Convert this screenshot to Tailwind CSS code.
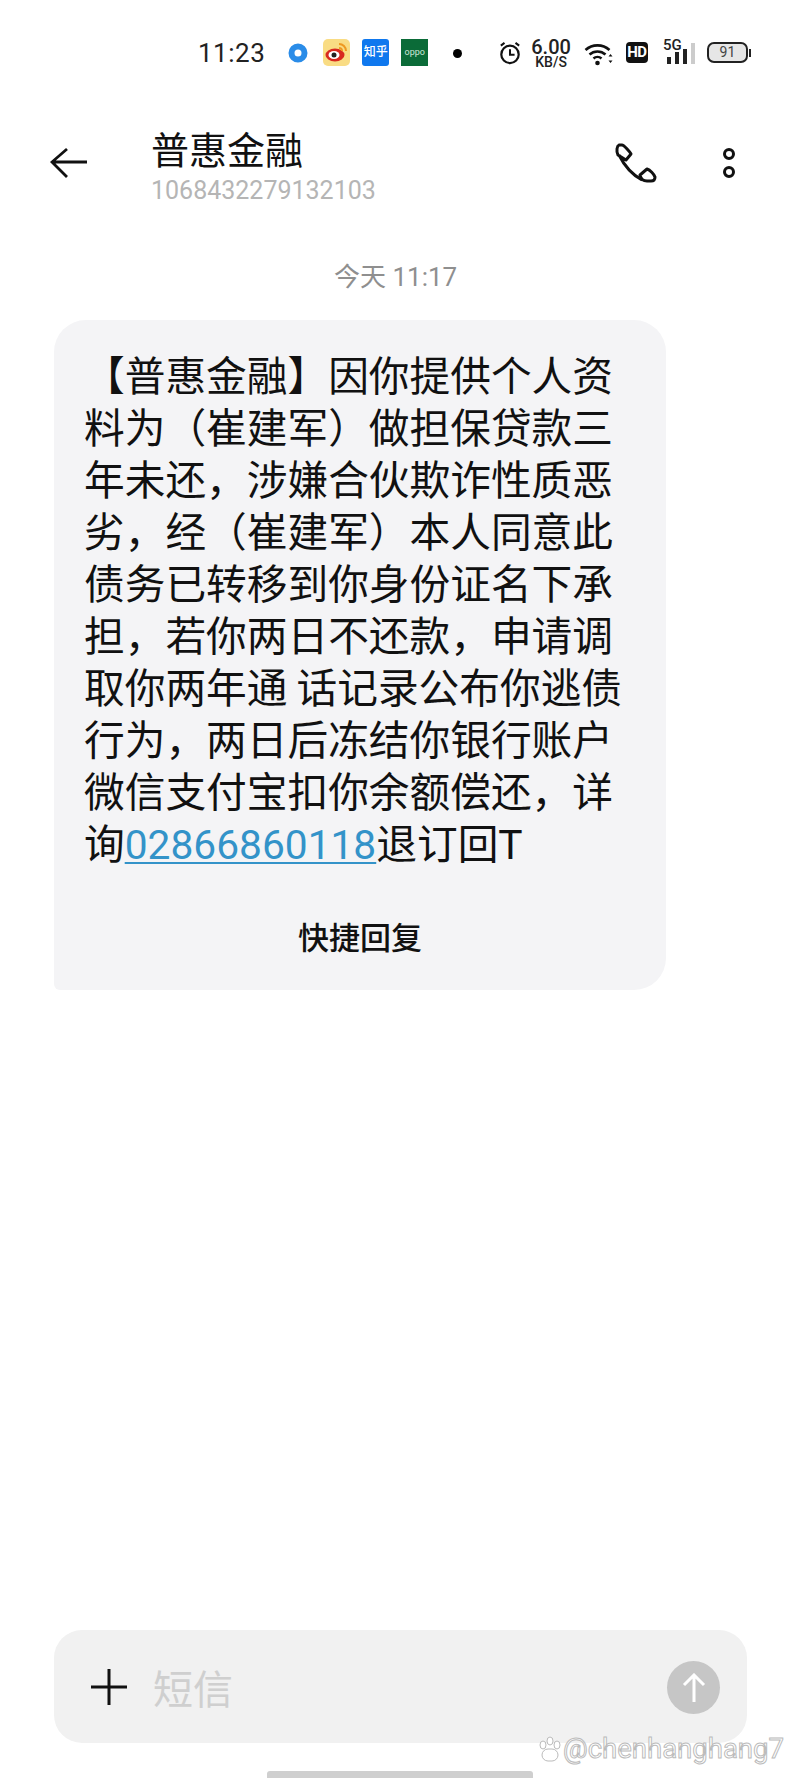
<!DOCTYPE html>
<html lang="en">
<head>
    <meta charset="UTF-8" />
    <title>普惠金融</title>
    <script src="https://cdn.jsdelivr.net/npm/@tailwindcss/browser@4"></script>
</head>
<body class="bg-white text-black font-['Roboto','Noto_Sans_CJK_SC',sans-serif]">
<div class="relative w-[800px] h-[1778px] overflow-hidden flex flex-col">

    <!-- status bar -->
    <div class="h-[106px] pl-[198px] pt-[38px] flex items-start">
        <span class="text-[26px] leading-[30px] text-[#222] tracking-[0.5px]">11:23</span>
        <svg class="ml-[23px] mt-[5px]" width="20" height="20" viewBox="0 0 20 20"><circle cx="10" cy="10" r="6.5" fill="none" stroke="#2a8ce8" stroke-width="6"/></svg>
        <svg class="ml-[15px] mt-[1px]" width="27" height="27" viewBox="0 0 27 27"><rect width="27" height="27" rx="5" fill="#f9dc84"/><ellipse cx="12" cy="16" rx="9.5" ry="6.5" fill="#d8281f"/><ellipse cx="11" cy="16" rx="5.5" ry="4" fill="#fff"/><circle cx="11" cy="16" r="2.5" fill="#222"/><path d="M16 5a7 7 0 0 1 7 7M16 9a3 3 0 0 1 3 3" fill="none" stroke="#ee9922" stroke-width="2"/></svg>
        <div class="ml-[12px] mt-[1px] w-[27px] h-[27px] rounded-[3px] bg-[#0f78ee] text-white text-[12px] leading-[27px] text-center font-medium">知乎</div>
        <div class="ml-[12px] mt-[1px] w-[27px] h-[27px] bg-[#0b6b38] text-[#cfe8d8] text-[9px] leading-[27px] text-center">oppo</div>
        <div class="ml-[25px] mt-[11px] w-[9px] h-[9px] rounded-full bg-black"></div>
        <svg class="ml-[37px] mt-[3px]" width="22" height="24" viewBox="0 0 24 26"><circle cx="12" cy="14.500" r="9.500" fill="none" stroke="#111" stroke-width="2.400"/><path d="M12 9v6h5" fill="none" stroke="#111" stroke-width="2.200"/><path d="M2 5l4-3M22 5l-4-3" stroke="#111" stroke-width="2.200"/></svg>
        <div class="ml-[10px] flex flex-col items-center text-[#222]">
            <span class="text-[20px] leading-[18px] font-medium">6.00</span>
            <span class="text-[14px] leading-[13px] font-medium">KB/S</span>
        </div>
        <svg class="ml-[13px] mt-[4px]" width="31" height="24" viewBox="0 0 30 24"><path d="M1 8a18 18 0 0 1 24 0M5 12.500a12 12 0 0 1 16 0M9 16.500a6 6 0 0 1 8 0" fill="none" stroke="#111" stroke-width="2.600"/><circle cx="13" cy="21" r="2.300" fill="#111"/><path d="M26 12l2 2.500h-4zM26 21l2-2.500h-4z" fill="#111"/></svg>
        <div class="ml-[11px] mt-[4px] w-[22px] h-[21px] rounded-[4px] bg-[#111] text-white text-[15px] leading-[21px] text-center font-bold tracking-[-0.5px]">HD</div>
        <div class="ml-[15px] relative w-[32px] h-[26px]">
            <span class="absolute left-0 top-[1px] text-[15px] leading-[13px] font-medium text-[#222]">5G</span>
            <div class="absolute left-[4px] bottom-0 w-[4px] h-[7px] bg-[#222]"></div>
            <div class="absolute left-[12px] bottom-0 w-[4px] h-[12px] bg-[#222]"></div>
            <div class="absolute left-[20px] bottom-0 w-[4px] h-[15px] bg-[#222]"></div>
            <div class="absolute left-[28px] bottom-0 w-[4px] h-[21px] bg-[#ccc]"></div>
        </div>
        <div class="ml-[12px] mt-[4px] flex items-center">
            <div class="w-[41px] h-[21px] rounded-[7px] border-2 border-[#222] bg-[#e6e6e6] text-[14px] leading-[17px] text-center text-[#444]">91</div>
            <div class="ml-[1px] w-[2px] h-[8px] bg-[#222]"></div>
        </div>
    </div>

    <!-- header -->
    <div class="h-[104px] flex items-start relative">
        <svg class="ml-[50px] mt-[40px]" width="38" height="34" viewBox="0 0 38 34"><path d="M17 3L2 16l15 15M2 16h35" fill="none" stroke="#111" stroke-width="2.800"/></svg>
        <div class="ml-[63px] mt-[-2px] flex flex-col pt-[15px]">
            <span class="text-[38px] leading-[57px] text-[#111] font-['Noto_Sans_CJK_SC',sans-serif]">普惠金融</span>
            <span class="text-[25px] leading-[30px] text-[#b5b5b5]">1068432279132103</span>
        </div>
        <svg class="absolute left-[614px] top-[36px]" width="44" height="42" viewBox="0 0 44 42"><path d="M5 3h3c2 0 8 7 9 9l-5 6-8-5C2 9 3 4 5 3zM5 13c5 10 12 19 23 25M26 33l7-6c3 1 7 5 8 8 0 3-2 4-4 4h-4c-3 0-6-2-7-6z" fill="none" stroke="#111" stroke-width="3" stroke-linejoin="round"/></svg>
        <svg class="absolute left-[720px] top-[42px]" width="20" height="34" viewBox="0 0 20 34"><circle cx="9" cy="6" r="4.500" fill="none" stroke="#111" stroke-width="3"/><circle cx="9" cy="24" r="4.500" fill="none" stroke="#111" stroke-width="3"/></svg>
    </div>

    <!-- time -->
    <div class="mt-[50px] pl-[334px] text-[26px] leading-[34px] text-[#8f8f8f]">今天 11:17</div>

    <!-- bubble -->
    <div class="mt-[26px] ml-[54px] w-[612px] h-[670px] bg-[#f4f4f6] rounded-[32px] rounded-bl-[6px] pt-[28px] pl-[30px] relative">
        <div class="text-[40.700px] leading-[52px] text-[#111] whitespace-nowrap font-['Noto_Sans_CJK_SC',sans-serif]">
            <div>【普惠金融】因你提供个人资</div>
            <div>料为（崔建军）做担保贷款三</div>
            <div>年未还，涉嫌合伙欺诈性质恶</div>
            <div>劣，经（崔建军）本人同意此</div>
            <div>债务已转移到你身份证名下承</div>
            <div>担，若你两日不还款，申请调</div>
            <div>取你两年通 话记录公布你逃债</div>
            <div>行为，两日后冻结你银行账户</div>
            <div>微信支付宝扣你余额偿还，详</div>
            <div>询<a class="text-[#3393c9] underline underline-offset-[3px] decoration-2 font-['Roboto',sans-serif]">02866860118</a>退订回<span class="font-['Roboto',sans-serif]">T</span></div>
        </div>
        <div class="absolute left-0 right-0 top-[599px] text-center text-[31px] leading-[40px] font-medium text-[#111]">快捷回复</div>
    </div>

    <!-- composer -->
    <div class="absolute left-[54px] top-[1630px] w-[693px] h-[113px] rounded-[28px] bg-[#f1f1f1] flex items-center">
        <svg class="ml-[37px]" width="36" height="36" viewBox="0 0 36 36"><path d="M18 0v36M0 18h36" stroke="#111" stroke-width="3"/></svg>
        <span class="ml-[26px] text-[40px] leading-[50px] text-[#cfcfcf] font-['Noto_Sans_CJK_SC',sans-serif]">短信</span>
        <div class="absolute left-[613px] top-[31px] w-[53px] h-[53px] rounded-full bg-[#c6c6c6] flex items-center justify-center">
            <svg width="24" height="30" viewBox="0 0 24 30"><path d="M2 12L12 2l10 10M12 2v27" fill="none" stroke="#fff" stroke-width="3"/></svg>
        </div>
    </div>

    <!-- home bar -->
    <div class="absolute left-[267px] top-[1771px] w-[266px] h-[7px] rounded-t-[3px] bg-[#cfcfcf]"></div>

    <!-- watermark -->
    <div class="absolute left-[538px] top-[1732px] flex items-center text-[27.500px] leading-[34px] text-white [-webkit-text-stroke:1px_#bbb]">
        <svg width="24" height="26" viewBox="0 0 24 26"><g fill="#fff" stroke="#bbb"><ellipse cx="5" cy="9" rx="3" ry="4"/><ellipse cx="12" cy="5" rx="3" ry="4"/><ellipse cx="19" cy="9" rx="3" ry="4"/><rect x="4" y="13" width="16" height="12" rx="6"/></g></svg>
        <span class="ml-[1px]">@chenhanghang7</span>
    </div>
</div>
</body>
</html>
